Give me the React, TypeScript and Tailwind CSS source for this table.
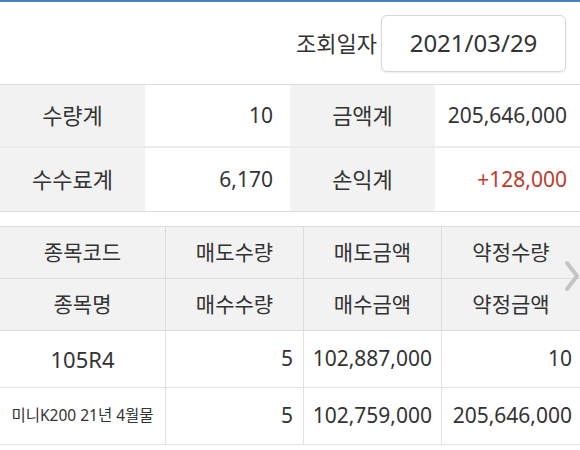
import React from 'react';

const font = { fontFamily: '"Noto Sans", "Noto Sans CJK KR", sans-serif' };

const summary = [
  { label: '수량계', value: '10', label2: '금액계', value2: '205,646,000', red: false },
  { label: '수수료계', value: '6,170', label2: '손익계', value2: '+128,000', red: true },
];

const heads = [
  ['종목코드', '매도수량', '매도금액', '약정수량'],
  ['종목명', '매수수량', '매수금액', '약정금액'],
];

const rows = [
  { name: '105R4', qty: '5', amt: '102,887,000', total: '10', small: false },
  { name: '미니K200 21년 4월물', qty: '5', amt: '102,759,000', total: '205,646,000', small: true },
];

export default function App() {
  return (
    <div className="w-[580px] h-[450px] bg-white overflow-hidden relative text-[#333]" style={font}>
      <div className="h-[2px] bg-[#4a7fc0]" />

      {/* 조회일자 */}
      <div className="h-[82px] flex items-center justify-end pr-[14px]">
        <span className="text-[22px] mr-[4px]">조회일자</span>
        <div className="w-[185px] h-[57px] border border-[#d6d6d6] rounded-[6px] flex items-center justify-center text-[24px] shadow-[0_1px_2px_rgba(0,0,0,0.08)]">
          2021/03/29
        </div>
      </div>

      {/* 합계 */}
      <div className="border-t border-b border-[#dddddd]">
        {summary.map((r, i) => (
          <div key={i} className={`grid grid-cols-4 h-[63px] text-[21px] ${i === 0 ? 'border-b-2 border-[#ececec]' : ''}`}>
            <div className="bg-[#f2f2f2] flex items-center justify-center text-[22px]">{r.label}</div>
            <div className="flex items-center justify-end pr-[17px]">{r.value}</div>
            <div className="bg-[#f2f2f2] flex items-center justify-center text-[22px]">{r.label2}</div>
            <div className={`flex items-center justify-end pr-[13px] ${r.red ? 'text-[#c0392b]' : ''}`}>{r.value2}</div>
          </div>
        ))}
      </div>

      {/* 체결내역 */}
      <div className="mt-[14px] border-t border-[#dcdcdc] relative">
        {heads.map((h, i) => (
          <div key={i} className="grid grid-cols-[166px_138px_138px_138px] h-[52px] bg-[#f2f2f2] border-b border-[#dcdcdc] text-[21px]">
            {h.map((t, j) => (
              <div key={j} className={`flex items-center justify-center ${j < 3 ? 'border-r border-[#dcdcdc]' : ''}`}>{t}</div>
            ))}
          </div>
        ))}
        {rows.map((r, i) => (
          <div key={i} className="grid grid-cols-[166px_138px_138px_138px] h-[57px] border-b border-[#e2e2e2] text-[21px]">
            <div className={`flex items-center justify-center border-r border-[#e2e2e2] ${r.small ? 'text-[15.5px]' : 'text-[22px]'}`}>{r.name}</div>
            <div className="flex items-center justify-end pr-[10px] border-r border-[#e2e2e2]">{r.qty}</div>
            <div className="flex items-center justify-end pr-[9px] border-r border-[#e2e2e2]">{r.amt}</div>
            <div className="flex items-center justify-end pr-[8px]">{r.total}</div>
          </div>
        ))}
        <svg className="absolute left-[564px] top-[33px]" width="16" height="32" viewBox="0 0 16 32">
          <polyline points="3,3 13,16 3,29" fill="none" stroke="#c4c4c4" strokeWidth="4" strokeLinecap="round" strokeLinejoin="round" />
        </svg>
      </div>
    </div>
  );
}
